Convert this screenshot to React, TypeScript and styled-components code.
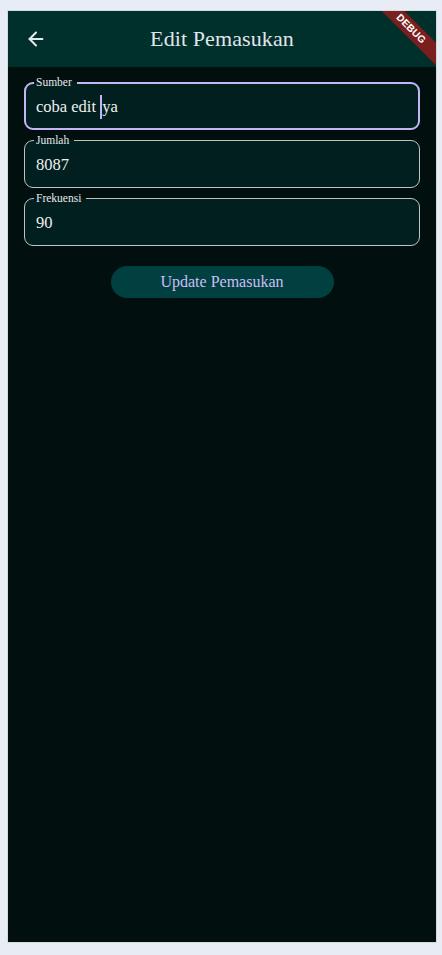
import styled, { createGlobalStyle } from 'styled-components';
import { ArrowLeft } from 'lucide-react';

const GlobalStyle = createGlobalStyle`
  html, body {
    margin: 0;
    padding: 0;
    background: #e8ecf4;
  }
  * {
    box-sizing: border-box;
  }
`;

const serif = `'Liberation Serif', 'Times New Roman', serif`;

const fields: FieldType[] = [
  { label: 'Sumber', before: 'coba edit ', after: 'ya', focused: true },
  { label: 'Jumlah', before: '8087', after: '' },
  { label: 'Frekuensi', before: '90', after: '' },
];

const App = () => {
  return (
    <Page>
      <GlobalStyle />
      <Phone>
        <AppBar>
          <BackButton>
            <ArrowLeft size={22} strokeWidth={2.2} />
          </BackButton>
          <Title>Edit Pemasukan</Title>
          <Banner>DEBUG</Banner>
        </AppBar>
        <Body>
          <Form>
            {fields.map((f) => (
              <Field key={f.label} $focused={!!f.focused}>
                <Legend>{f.label}</Legend>
                <Value>
                  {f.before}
                  {f.focused && <Caret />}
                  {f.after}
                </Value>
              </Field>
            ))}
          </Form>
          <ButtonRow>
            <UpdateButton>Update Pemasukan</UpdateButton>
          </ButtonRow>
        </Body>
      </Phone>
    </Page>
  );
};

type FieldType = {
  label: string;
  before: string;
  after: string;
  focused?: boolean;
};

const Page = styled.div`
  width: 442px;
  height: 955px;
  padding: 10px 5px 12px 7px;
  font-family: ${serif};
`;

const Phone = styled.div`
  width: 430px;
  height: 933px;
  display: flex;
  flex-direction: column;
  background: #010f0e;
  border: 1px solid #d4d9e2;
  overflow: hidden;
`;

const AppBar = styled.div`
  position: relative;
  height: 56px;
  flex-shrink: 0;
  display: flex;
  align-items: center;
  justify-content: center;
  background: #00302c;
  overflow: hidden;
`;

const BackButton = styled.div`
  position: absolute;
  left: 17px;
  top: 17px;
  color: #e6e8ec;
  display: flex;
`;

const Title = styled.h1`
  margin: 0;
  font-family: ${serif};
  font-size: 22px;
  font-weight: 400;
  color: #e2e5ea;
  letter-spacing: 0.1px;
`;

const Banner = styled.div`
  position: absolute;
  top: 10px;
  right: -30px;
  width: 110px;
  height: 16px;
  background: #7a1e1e;
  color: #ffffff;
  transform: rotate(45deg);
  font-family: 'Liberation Sans', Arial, sans-serif;
  font-size: 10px;
  font-weight: 700;
  line-height: 16px;
  text-align: center;
  letter-spacing: 0.2px;
`;

const Body = styled.div`
  flex: 1;
  padding: 9px 16px 0 16px;
`;

const Form = styled.div`
  display: flex;
  flex-direction: column;
  gap: 4px;
`;

const Field = styled.fieldset<{ $focused: boolean }>`
  display: block;
  margin: 0;
  min-width: 0;
  padding: ${(p) => (p.$focused ? '0 10px 4px' : '0 11px 5px')};
  border: ${(p) => (p.$focused ? '2px solid #c4b5f4' : '1px solid #bcc4c4')};
  border-radius: 9px;
  background: #021f1f;
  font-family: ${serif};
`;

const Legend = styled.legend`
  margin-left: -2px;
  padding: 0 5px 0 2px;
  font-family: ${serif};
  font-size: 11.5px;
  line-height: 13px;
  color: #e6e8ea;
`;

const Value = styled.div`
  display: flex;
  align-items: center;
  height: 35px;
  font-family: ${serif};
  font-size: 16.5px;
  color: #eef0f0;
  white-space: pre;
`;

const Caret = styled.span`
  display: inline-block;
  width: 2px;
  height: 24px;
  background: #c4b5f4;
`;

const ButtonRow = styled.div`
  display: flex;
  justify-content: center;
  margin-top: 20px;
`;

const UpdateButton = styled.button`
  width: 223px;
  height: 32px;
  border: none;
  border-radius: 16px;
  background: #004040;
  color: #cdbdf5;
  font-family: ${serif};
  font-size: 16px;
  padding: 0;
`;

export default App;
